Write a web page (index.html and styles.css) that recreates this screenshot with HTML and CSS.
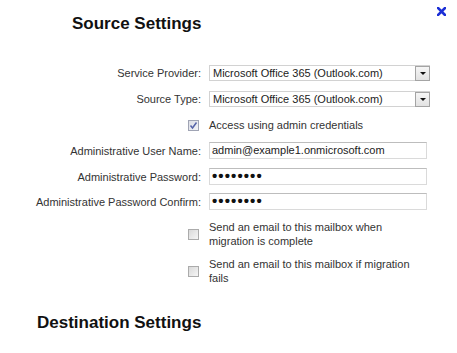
FILE: index.html
```html
<!DOCTYPE html>
<html>
<head>
<meta charset="utf-8">
<link rel="stylesheet" href="styles.css">
</head>
<body>
<div class="page">
  <a class="close" href="#" aria-label="Close">
    <svg width="9" height="9" viewBox="0 0 9 9"><path d="M1 1 L8 8 M8 1 L1 8" stroke="#1c2fd6" stroke-width="2.6" stroke-linecap="square" fill="none"/></svg>
  </a>
  <h2 class="title title-source">Source Settings</h2>
  <div class="form">
    <div class="row r1">
      <label class="label">Service Provider:</label>
      <div class="select"><span class="sel-text">Microsoft Office 365 (Outlook.com)</span><span class="arrow"><svg width="6" height="3" viewBox="0 0 6 3"><path d="M0 0 H6 L3 3 Z" fill="#111"/></svg></span></div>
    </div>
    <div class="row r2">
      <label class="label">Source Type:</label>
      <div class="select"><span class="sel-text">Microsoft Office 365 (Outlook.com)</span><span class="arrow"><svg width="6" height="3" viewBox="0 0 6 3"><path d="M0 0 H6 L3 3 Z" fill="#111"/></svg></span></div>
    </div>
    <div class="row r3">
      <div class="cbcell"><span class="cb checked"><svg width="9" height="9" viewBox="0 0 9 9"><path d="M1.5 4.5 L3.5 7 L7.5 1.5" stroke="#5563a8" stroke-width="1.5" fill="none"/></svg></span></div>
      <div class="cbtext">Access using admin credentials</div>
    </div>
    <div class="row r4">
      <label class="label">Administrative User Name:</label>
      <div class="input">admin@example1.onmicrosoft.com</div>
    </div>
    <div class="row r5">
      <label class="label">Administrative Password:</label>
      <div class="input pw">••••••••</div>
    </div>
    <div class="row r6">
      <label class="label">Administrative Password Confirm:</label>
      <div class="input pw">••••••••</div>
    </div>
    <div class="row note r7">
      <div class="cbcell"><span class="cb"></span></div>
      <div class="notetext">Send an email to this mailbox when migration is complete</div>
    </div>
    <div class="row note r8">
      <div class="cbcell"><span class="cb"></span></div>
      <div class="notetext">Send an email to this mailbox if migration fails</div>
    </div>
  </div>
  <h2 class="title title-dest">Destination Settings</h2>
</div>
</body>
</html>
```
FILE: styles.css
```css
html, body {
  margin: 0;
  padding: 0;
  background: #fff;
}
body {
  font-family: "Liberation Sans", Arial, sans-serif;
  color: #333;
  font-size: 11px;
}
.page {
  position: relative;
  width: 457px;
  height: 353px;
  padding-top: 14px;
  box-sizing: border-box;
  overflow: hidden;
}
.close {
  position: absolute;
  left: 437px;
  top: 7px;
  width: 9px;
  height: 9px;
  display: block;
  line-height: 0;
}
.title {
  margin: 0;
  font-size: 17px;
  line-height: 20px;
  font-weight: 700;
  color: #111;
}
.title-source {
  margin-left: 72px;
}
.title-dest {
  margin-left: 37px;
  margin-top: 28px;
}
.form {
  margin-top: 31px;
  display: flex;
  flex-direction: column;
}
.row {
  display: grid;
  grid-template-columns: 201px auto;
  column-gap: 8px;
  align-items: center;
}
.r2 { margin-top: 10px; }
.r3 { margin-top: 10px; height: 17px; }
.r4 { margin-top: 8px; }
.r5 { margin-top: 9px; }
.r6 { margin-top: 8px; }
.r7 { margin-top: 10px; }
.r8 { margin-top: 9px; }
.label {
  text-align: right;
  line-height: 14px;
  white-space: nowrap;
}
.select {
  width: 221px;
  height: 16px;
  box-sizing: border-box;
  border: 1px solid #d2d2d2;
  background: #fff;
  display: flex;
  align-items: flex-start;
  justify-content: space-between;
  color: #222;
}
.sel-text {
  padding-left: 3px;
  line-height: 14px;
  white-space: nowrap;
}
.arrow {
  width: 15px;
  height: 15px;
  box-sizing: border-box;
  border: 1px solid #a4a4a4;
  background: linear-gradient(#f6f6f6, #e2e2e2);
  display: flex;
  align-items: center;
  justify-content: center;
  margin-right: -1px;
}
.input {
  width: 218px;
  height: 17px;
  box-sizing: border-box;
  border: 1px solid #dadada;
  border-top-color: #bdbdbd;
  padding-left: 2px;
  line-height: 15px;
  color: #222;
  white-space: nowrap;
}
.input.pw {
  font-size: 15px;
  letter-spacing: 1.1px;
  line-height: 14px;
  color: #111;
  font-weight: 700;
}
.cbcell {
  display: flex;
  justify-content: flex-end;
  padding-right: 2px;
}
.cb {
  width: 11px;
  height: 11px;
  box-sizing: border-box;
  border: 1px solid #ababab;
  background: linear-gradient(135deg, #d9d9d9, #f6f6f6);
  display: flex;
  align-items: center;
  justify-content: center;
}
.cb.checked {
  border-color: #a0a4b4;
  background: linear-gradient(135deg, #dcdee6, #f2f3f7);
}
.cbtext {
  line-height: 17px;
  white-space: nowrap;
}
.notetext {
  width: 215px;
  line-height: 14px;
}
```
